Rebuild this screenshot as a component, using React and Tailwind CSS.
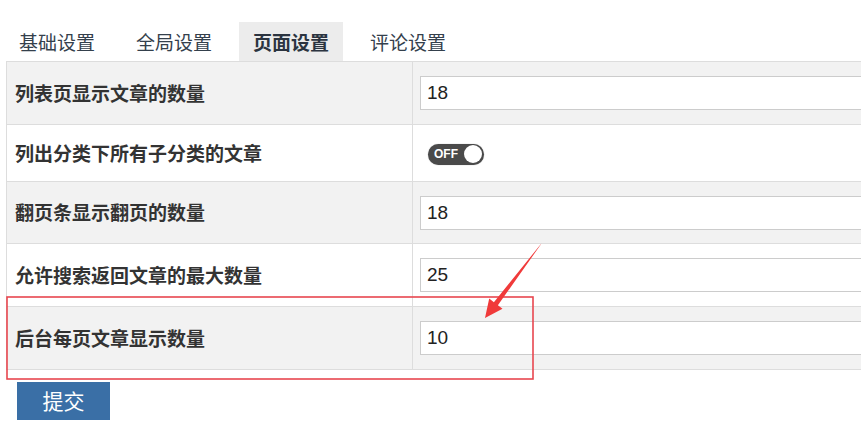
import React, { useState } from 'react';

const tabs = ['基础设置', '全局设置', '页面设置', '评论设置'];

const rows = [
  { label: '列表页显示文章的数量', value: '18', h: 'h-[63px]', bg: 'bg-[#f2f2f2]' },
  { label: '列出分类下所有子分类的文章', toggle: true, h: 'h-[57px]', bg: 'bg-white' },
  { label: '翻页条显示翻页的数量', value: '18', h: 'h-[62px]', bg: 'bg-[#f2f2f2]' },
  { label: '允许搜索返回文章的最大数量', value: '25', h: 'h-[63px]', bg: 'bg-white' },
  { label: '后台每页文章显示数量', value: '10', h: 'h-[63px]', bg: 'bg-[#f2f2f2]' },
];

const Toggle = () => (
  <div className="flex h-[21px] w-[56px] items-center rounded-full bg-[#4a4a4a] pl-[6px] pr-[2px] shadow-[0_0_1px_#999]">
    <span className="font-['Liberation_Sans',sans-serif] text-[12px] font-bold leading-none text-white">OFF</span>
    <span className="ml-auto h-[18px] w-[18px] rounded-full bg-white"></span>
  </div>
);

export default function App() {
  const [active, setActive] = useState(2);

  return (
    <div className="relative h-[438px] w-[861px] overflow-hidden bg-white font-['Noto_Sans_CJK_SC',sans-serif] text-[#333]">
      {/* tab bar */}
      <div className="flex pt-[22px] pl-[5px]">
        {tabs.map((t, i) => (
          <button
            key={t}
            onClick={() => setActive(i)}
            className={`h-[39px] px-[14px] mr-[13px] text-[19px] leading-[39px] ${
              i === active ? 'bg-[#ececec] font-bold text-[#2b3440]' : 'text-[#34404c]'
            }`}
          >
            {t}
          </button>
        ))}
      </div>

      {/* settings table */}
      <div className="ml-[6px] w-[900px] border-t border-[#dddddd]">
        {rows.map((r) => (
          <div key={r.label} className={`flex border-b border-[#dddddd] ${r.h} ${r.bg}`}>
            <div className="flex w-[407px] items-center border-l border-r border-[#dddddd] pl-[8px] text-[19px] font-bold text-[#333]">
              {r.label}
            </div>
            <div className="flex flex-1 items-center pl-[7px]">
              {r.toggle ? (
                <div className="pl-[8px] pt-[2px]">
                  <Toggle />
                </div>
              ) : (
                <input
                  defaultValue={r.value}
                  className="h-[34px] w-[480px] border border-[#cccccc] bg-white px-[6px] font-['Liberation_Sans',sans-serif] text-[19px] text-[#222] outline-none"
                />
              )}
            </div>
          </div>
        ))}
      </div>

      <div className="pl-[17px] pt-[12px]">
        <button className="h-[38px] w-[93px] bg-[#3a6fa6] text-[21px] text-white">提交</button>
      </div>

      {/* red annotation: frame around the last row and a pointer */}
      <svg className="pointer-events-none absolute left-0 top-0" width="861" height="438">
        <rect x="7" y="297" width="526" height="82" fill="none" stroke="#e8464f" strokeWidth="1.6" />
        <polygon
          points="541.5,243.5 497.9,305.2 502.5,308.8 485,318 489.2,298.6 493.9,302.2 540.5,244.5"
          fill="#f03a3a"
        />
      </svg>
    </div>
  );
}
